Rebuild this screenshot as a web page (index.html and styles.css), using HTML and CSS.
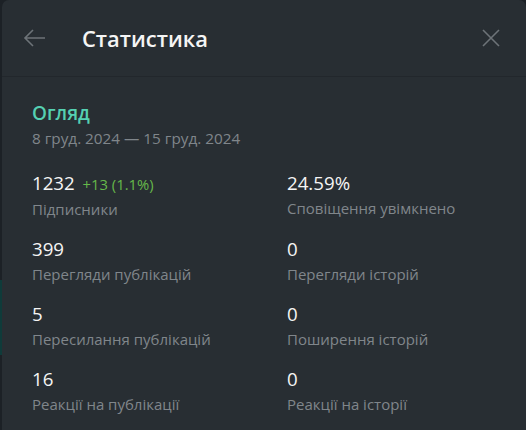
FILE: index.html
```html
<!DOCTYPE html>
<html lang="uk">
<head>
    <meta charset="UTF-8">
    <meta name="viewport" content="width=device-width, initial-scale=1.0">
    <title>Статистика</title>
    <link rel="stylesheet" href="styles.css">
</head>
<body>
    <div class="edge">
        <div class="edge-accent"></div>
    </div>
    <div class="dialog">
        <div class="header">
            <button class="icon-btn back" aria-label="Назад">
                <svg width="24" height="20" viewBox="0 0 24 20">
                    <path d="M2 10 H22 M10 2 L2 10 L10 18" fill="none" stroke="#6d7378" stroke-width="1.6"/>
                </svg>
            </button>
            <h1 class="title">Статистика</h1>
            <button class="icon-btn close" aria-label="Закрити">
                <svg width="20" height="20" viewBox="0 0 20 20">
                    <path d="M2 2 L18 18 M18 2 L2 18" fill="none" stroke="#6d7378" stroke-width="1.6"/>
                </svg>
            </button>
        </div>

        <div class="content">
            <div class="section-title">Огляд</div>
            <div class="period">8 груд. 2024 — 15 груд. 2024</div>

            <div class="stats">
                <div class="stat">
                    <div class="value">1232 <span class="delta">+13 (1.1%)</span></div>
                    <div class="label">Підписники</div>
                </div>
                <div class="stat">
                    <div class="value">24.59%</div>
                    <div class="label">Сповіщення увімкнено</div>
                </div>
                <div class="stat">
                    <div class="value">399</div>
                    <div class="label">Перегляди публікацій</div>
                </div>
                <div class="stat">
                    <div class="value">0</div>
                    <div class="label">Перегляди історій</div>
                </div>
                <div class="stat">
                    <div class="value">5</div>
                    <div class="label">Пересилання публікацій</div>
                </div>
                <div class="stat">
                    <div class="value">0</div>
                    <div class="label">Поширення історій</div>
                </div>
                <div class="stat">
                    <div class="value">16</div>
                    <div class="label">Реакції на публікації</div>
                </div>
                <div class="stat">
                    <div class="value">0</div>
                    <div class="label">Реакції на історії</div>
                </div>
            </div>
        </div>
    </div>
</body>
</html>
```

FILE: styles.css
```css
html, body {
    height: 100%;
}
body {
    margin: 0;
    display: flex;
    background-color: #1c2126;
    font-family: "Open Sans", "Noto Sans", sans-serif;
    overflow: hidden;
}
.edge {
    width: 2px;
    padding-top: 280px;
}
.edge-accent {
    height: 75px;
    background-color: #0f3b3a;
}
.dialog {
    flex: 1;
    background-color: #282e33;
    border-top-left-radius: 7px;
    border-top-right-radius: 7px;
}
.header {
    height: 76px;
    display: flex;
    align-items: center;
    border-bottom: 1px solid #22272c;
}
.icon-btn {
    background: none;
    border: none;
    padding: 0;
    display: flex;
    cursor: pointer;
}
.back {
    margin-left: 21px;
}
.title {
    margin: 0 0 0 35px;
    flex: 1;
    font-size: 21.9px;
    font-weight: 600;
    color: #f5f5f5;
}
.close {
    margin-right: 25px;
}
.content {
    padding: 24px 30px 0 30px;
}
.section-title {
    font-size: 19px;
    line-height: 24px;
    font-weight: 600;
    color: #55d0b2;
}
.period {
    margin-top: 3px;
    font-size: 15.3px;
    line-height: 20px;
    color: #80868b;
}
.stats {
    margin-top: 24px;
    display: grid;
    grid-template-columns: 255px 1fr;
    row-gap: 19px;
}
.value {
    font-size: 18.7px;
    line-height: 22px;
    color: #f5f5f5;
}
.delta {
    margin-left: 3px;
    font-size: 14.8px;
    color: #66b84a;
}
.label {
    margin-top: 4px;
    font-size: 15px;
    line-height: 20px;
    color: #80868b;
}
```
